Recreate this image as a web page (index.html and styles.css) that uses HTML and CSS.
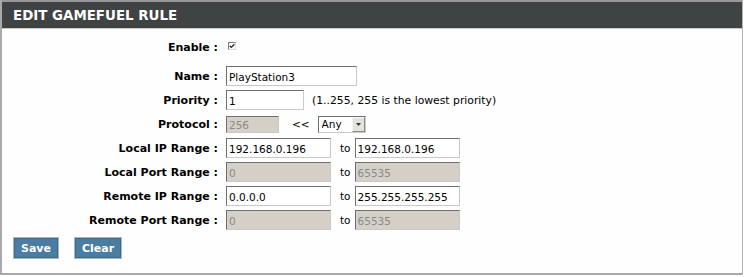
FILE: index.html
```html
<!DOCTYPE html>
<html lang="en">
<head>
    <meta charset="UTF-8">
    <title>Edit GameFuel Rule</title>
    <link rel="stylesheet" href="styles.css">
</head>
<body>
    <div class="box">
        <h2 class="box-title">EDIT GAMEFUEL RULE</h2>
        <form id="ruleForm">
            <table class="rule-table">
                <tr class="first">
                    <td class="label">Enable :</td>
                    <td>
                        <span class="check">
                            <svg width="8" height="8" viewBox="0 0 8 8"><path d="M1.8 3.8 L3.3 5.4 L6.3 2.2" fill="none" stroke="#222" stroke-width="1.3"/></svg>
                        </span>
                    </td>
                </tr>
                <tr>
                    <td class="label">Name :</td>
                    <td><input type="text" class="w-name" value="PlayStation3"></td>
                </tr>
                <tr>
                    <td class="label">Priority :</td>
                    <td><input type="text" class="w-pri" value="1"><span class="hint">(1..255, 255 is the lowest priority)</span></td>
                </tr>
                <tr>
                    <td class="label">Protocol :</td>
                    <td>
                        <input type="text" class="w-proto small" value="256" disabled><span class="arrows">&lt;&lt;</span><span class="select-wrap"><select class="proto-select"><option>Any</option><option>TCP</option><option>UDP</option><option>Both</option></select><span class="select-btn"><svg width="5" height="3" viewBox="0 0 5 3"><path d="M0 0 H5 L2.5 3 Z" fill="#333"/></svg></span></span>
                    </td>
                </tr>
                <tr>
                    <td class="label">Local IP Range :</td>
                    <td><input type="text" class="w-ip" value="192.168.0.196"><span class="to">to</span><input type="text" class="w-ip" value="192.168.0.196"></td>
                </tr>
                <tr>
                    <td class="label">Local Port Range :</td>
                    <td><input type="text" class="w-ip" value="0" disabled><span class="to">to</span><input type="text" class="w-ip" value="65535" disabled></td>
                </tr>
                <tr>
                    <td class="label">Remote IP Range :</td>
                    <td><input type="text" class="w-ip" value="0.0.0.0"><span class="to">to</span><input type="text" class="w-ip" value="255.255.255.255"></td>
                </tr>
                <tr>
                    <td class="label">Remote Port Range :</td>
                    <td><input type="text" class="w-ip" value="0" disabled><span class="to">to</span><input type="text" class="w-ip" value="65535" disabled></td>
                </tr>
            </table>
            <div class="actions">
                <button type="submit" class="btn">Save</button>
                <button type="reset" class="btn">Clear</button>
            </div>
        </form>
    </div>
</body>
</html>
```

FILE: styles.css
```css
body {
    margin: 0;
    background: #ffffff;
    font-family: "DejaVu Sans", Tahoma, sans-serif;
    font-size: 10px;
    color: #000;
}
.box {
    width: 740px;
    height: 273px;
    border-left: 2px solid #a9a9a9;
    border-right: 1px solid #b5b5b5;
    border-bottom: 2px solid #a9a9a9;
    background: #fefefe;
}
.box-title {
    margin: 0;
    padding: 0 0 0 11px;
    border-top: 2px solid #9a9a9a;
    border-bottom: 1px solid #c8c8c8;
    height: 26px;
    line-height: 27px;
    background: #404343;
    color: #ffffff;
    font-size: 13.4px;
    font-weight: bold;
}
.rule-table {
    margin-top: 6px;
    border-collapse: collapse;
}
.rule-table td {
    height: 24px;
    padding: 0;
    vertical-align: middle;
    white-space: nowrap;
}
.rule-table td.label {
    width: 216px;
    padding-right: 8px;
    text-align: right;
    font-weight: bold;
    font-size: 11px;
}
.rule-table tr.first td {
    padding-bottom: 5px;
}
.check {
    display: inline-block;
    width: 8px;
    height: 8px;
    margin: 0 0 0 2px;
    border-top: 1px solid #7a7a7a;
    border-left: 1px solid #7a7a7a;
    border-right: 1px solid #d8d8d8;
    border-bottom: 1px solid #d8d8d8;
    box-sizing: border-box;
    position: relative;
    top: -1px;
    background: #fff;
}
.check svg {
    display: block;
    margin: -1px 0 0 -1px;
}
input[type="text"] {
    box-sizing: border-box;
    height: 20px;
    margin: 0;
    padding: 1px 2px 0;
    font-family: "DejaVu Sans", Tahoma, sans-serif;
    font-size: 10.5px;
    color: #000;
    background: #ffffff;
    border-top: 1px solid #6f6f6f;
    border-left: 1px solid #6f6f6f;
    border-right: 1px solid #c9c9c9;
    border-bottom: 1px solid #c9c9c9;
    vertical-align: middle;
}
input[type="text"]:disabled {
    background: #d4d0c8;
    color: #8a8a8a;
}
input.small {
    height: 17px;
}
.w-name { width: 131px; }
.w-pri { width: 78px; }
.w-proto { width: 53px; }
.w-ip { width: 105px; }
.hint {
    margin-left: 8px;
    font-size: 10.8px;
    vertical-align: middle;
}
.arrows {
    display: inline-block;
    margin: 0 8px 0 13px;
    font-size: 10.5px;
    vertical-align: middle;
}
.to {
    display: inline-block;
    margin: 0 4px 0 9px;
    font-size: 10.5px;
    vertical-align: middle;
}
.select-wrap {
    position: relative;
    display: inline-block;
    vertical-align: middle;
}
.proto-select {
    appearance: none;
    -webkit-appearance: none;
    box-sizing: border-box;
    width: 48px;
    height: 17px;
    margin: 0;
    padding: 0 0 0 3px;
    font-family: "DejaVu Sans", Tahoma, sans-serif;
    font-size: 10.5px;
    color: #000;
    background: #fff;
    border-top: 1px solid #6f6f6f;
    border-left: 1px solid #6f6f6f;
    border-right: 1px solid #c9c9c9;
    border-bottom: 1px solid #c9c9c9;
    border-radius: 0;
}
.select-btn {
    position: absolute;
    right: 1px;
    top: 1px;
    width: 13px;
    height: 15px;
    box-sizing: border-box;
    background: #e4e2dc;
    border-left: 1px solid #f7f7f7;
    border-top: 1px solid #f7f7f7;
    border-right: 1px solid #8a8a8a;
    border-bottom: 1px solid #8a8a8a;
    display: flex;
    align-items: center;
    justify-content: center;
    pointer-events: none;
}
.actions {
    display: flex;
    gap: 15px;
    margin: 5px 0 0 11px;
}
.btn {
    height: 22px;
    padding: 0 7px;
    background: #4b7ca1;
    color: #ffffff;
    border: 1px solid #a9b9c6;
    box-shadow: inset 0 0 0 1px #3d6a8c;
    font-family: "DejaVu Sans", Tahoma, sans-serif;
    font-size: 11px;
    font-weight: bold;
    cursor: pointer;
}
.btn:hover {
    background: #3f6d91;
}
```
